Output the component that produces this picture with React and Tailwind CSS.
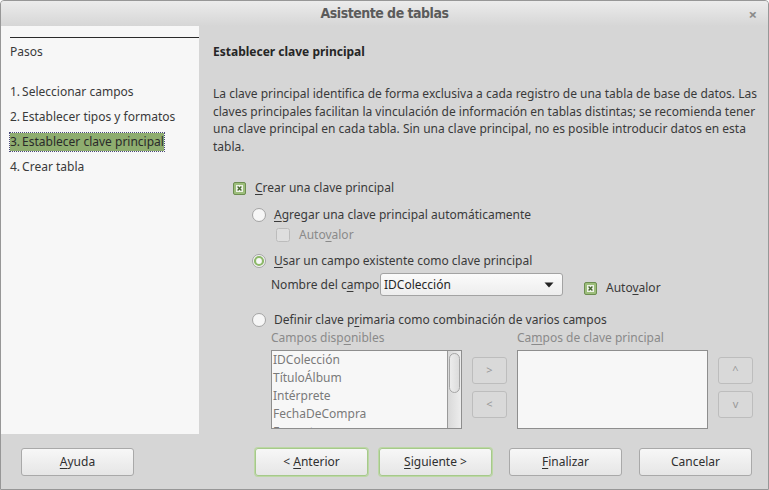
import React from 'react';

const font = { fontFamily: '"Noto Sans", "Open Sans", sans-serif' };

// small check box, ticked with a green square
const CheckOn = () => (
    <svg width="13" height="13" viewBox="0 0 13 13">
        <rect x="0.5" y="0.5" width="12" height="12" rx="1.5" fill="#9dbe7c" stroke="#6c8d50" />
        <rect x="3" y="3" width="7" height="7" fill="#eef3e8" />
        <path d="M4.6 4.6l3.8 3.8M8.4 4.6l-3.8 3.8" stroke="#46652f" strokeWidth="1.4" />
    </svg>
);

const CheckOff = () => (
    <svg width="14" height="14" viewBox="0 0 14 14">
        <rect x="0.5" y="0.5" width="13" height="13" rx="2" fill="#dedede" stroke="#bcbcbc" />
    </svg>
);

const Radio = ({ on }) => (
    <svg width="14" height="14" viewBox="0 0 14 14">
        <circle cx="7" cy="7" r="6.5" fill="#f6f6f6" stroke="#a3a3a3" />
        {on && <circle cx="7" cy="7" r="4" fill="#f8f8f8" stroke="#8db86a" strokeWidth="2.2" />}
    </svg>
);

const Btn = ({ children, focus, className = '' }) => (
    <div
        className={`h-[28px] w-[113px] flex items-center justify-center rounded-[3px] border text-[12px] text-[#2f2f2f] bg-gradient-to-b from-[#f7f7f7] to-[#e6e6e6] ${focus ? 'border-[#a6c98b] shadow-[0_0_0_1px_#bcd8a4]' : 'border-[#a9a9a9]'} ${className}`}
    >
        <span className="whitespace-pre">{children}</span>
    </div>
);

const SmallBtn = ({ children }) => (
    <div className="h-[27px] w-[35px] flex items-center justify-center rounded-[3px] border border-[#bdbdbd] bg-[#d9d9d9] text-[11px] text-[#9a9a9a]">
        {children}
    </div>
);

const u = (t) => <span className="underline underline-offset-2">{t}</span>;

export default function App() {
    const steps = [
        ['1.', 'Seleccionar campos'],
        ['2.', 'Establecer tipos y formatos'],
        ['3.', 'Establecer clave principal'],
        ['4.', 'Crear tabla'],
    ];
    const fields = ['IDColección', 'TítuloÁlbum', 'Intérprete', 'FechaDeCompra', 'Formato'];

    return (
        <div style={font} className="w-[769px] h-[490px] flex flex-col overflow-hidden border border-[#979797] rounded-t-[4px] bg-[#d6d6d6] text-[#3a3a3a]">
            {/* title bar */}
            <div className="relative h-[25px] shrink-0 flex items-center justify-center bg-gradient-to-b from-[#ececec] to-[#d6d6d6]">
                <span
                    style={{ fontFamily: '"Liberation Sans Narrow", "DejaVu Sans Condensed", sans-serif' }}
                    className="text-[14px] font-bold text-[#5b5b5b] tracking-[-0.5px]"
                >
                    Asistente de tablas
                </span>
                <span className="absolute right-[11px] top-[2px] text-[15px] font-bold text-[#8a8a8a]">×</span>
            </div>

            {/* body */}
            <div className="flex h-[408px] shrink-0">
                {/* steps */}
                <div className="w-[198px] shrink-0 bg-[#f7f7f7] pl-[9px] pt-[11px] text-[12px]">
                    <div className="border-t border-[#2a2a2a]" />
                    <div className="mt-[5px] h-[18px] leading-[18px]">Pasos</div>
                    <div className="mt-[22px] flex flex-col gap-[7px]">
                        {steps.map(([n, s], i) => (
                            <div key={s} className="h-[18px] leading-[18px]">
                                <span className={i === 2 ? 'inline-block bg-[#8ead6f] outline outline-1 outline-dotted outline-[#4a4a7a] text-[#2a2a2a]' : ''}>
                                    <span className="mr-[2px]">{n}</span>
                                    {s}
                                </span>
                            </div>
                        ))}
                    </div>
                </div>

                {/* page */}
                <div className="flex-1 pl-[14px] pt-[17px] text-[12px]">
                    <div className="h-[18px] leading-[18px] font-bold text-[#262626]">Establecer clave principal</div>
                    <p className="mt-[24px] w-[552px] leading-[17.5px]">
                        La clave principal identifica de forma exclusiva a cada registro de una tabla de base de datos. Las claves
                        principales facilitan la vinculación de información en tablas distintas; se recomienda tener una clave
                        principal en cada tabla. Sin una clave principal, no es posible introducir datos en esta tabla.
                    </p>

                    <div className="mt-[24px] ml-[20px] h-[18px] flex items-center gap-[9px]">
                        <CheckOn />
                        <span>{u('C')}rear una clave principal</span>
                    </div>
                    <div className="mt-[9px] ml-[39px] h-[18px] flex items-center gap-[8px]">
                        <Radio />
                        <span>{u('A')}gregar una clave principal automáticamente</span>
                    </div>
                    <div className="mt-[2px] ml-[63px] h-[18px] flex items-center gap-[9px] text-[#8a8a8a]">
                        <CheckOff />
                        <span>Auto{u('v')}alor</span>
                    </div>
                    <div className="mt-[8px] ml-[39px] h-[18px] flex items-center gap-[8px]">
                        <Radio on />
                        <span>{u('U')}sar un campo existente como clave principal</span>
                    </div>
                    <div className="mt-[3px] ml-[58px] h-[23px] flex items-center">
                        <span className="w-[109px] whitespace-nowrap">Nombre del c{u('a')}mpo</span>
                        <div className="h-[23px] w-[183px] flex items-center justify-between rounded-[3px] border border-[#a3a3a3] bg-gradient-to-b from-[#fbfbfb] to-[#ededed] pl-[3px] pr-[8px] text-[#262626]">
                            <span>IDColección</span>
                            <svg width="10" height="6" viewBox="0 0 10 6">
                                <path d="M0.5 0.5h9L5 5.5z" fill="#222" />
                            </svg>
                        </div>
                        <div className="ml-[21px] mt-[7px] flex items-center gap-[9px]">
                            <CheckOn />
                            <span>Auto{u('v')}alor</span>
                        </div>
                    </div>
                    <div className="mt-[15px] ml-[39px] h-[18px] flex items-center gap-[8px]">
                        <Radio />
                        <span>Definir clave p{u('r')}imaria como combinación de varios campos</span>
                    </div>

                    <div className="ml-[58px] flex text-[#8a8a8a]">
                        <div className="w-[246px] h-[17px] leading-[17px]">Campos disp{u('o')}nibles</div>
                        <div className="h-[17px] leading-[17px]">Ca{u('m')}pos de clave principal</div>
                    </div>
                    <div className="ml-[58px] mt-[4px] flex items-start">
                        <div className="w-[191px] h-[79px] flex border border-[#8e8e8e] bg-[#f7f7f7] overflow-hidden">
                            <div className="flex-1 pl-[1px] text-[#7a7a7a]">
                                {fields.map((f) => (
                                    <div key={f} className="h-[18px] leading-[18px]">{f}</div>
                                ))}
                            </div>
                            <div className="w-[14px] border-l border-[#9a9a9a] bg-gradient-to-r from-[#d9d9d9] to-[#ededed] px-[1px] pt-[2px]">
                                <div className="h-[40px] rounded-full border border-[#a5a5a5] bg-gradient-to-r from-[#ececec] to-[#dcdcdc]" />
                            </div>
                        </div>
                        <div className="ml-[10px] mt-[7px] flex flex-col gap-[7px]">
                            <SmallBtn>&gt;</SmallBtn>
                            <SmallBtn>&lt;</SmallBtn>
                        </div>
                        <div className="ml-[10px] w-[191px] h-[79px] border border-[#8e8e8e] bg-[#f7f7f7]" />
                        <div className="ml-[10px] mt-[7px] flex flex-col gap-[7px]">
                            <SmallBtn>^</SmallBtn>
                            <SmallBtn>v</SmallBtn>
                        </div>
                    </div>
                </div>
            </div>

            {/* buttons */}
            <div className="flex-1 flex items-center pl-[20px]">
                <Btn>{u('A')}yuda</Btn>
                <Btn focus className="ml-[121px]">{'< '}{u('A')}nterior</Btn>
                <Btn focus className="ml-[11px]">{u('S')}iguiente{' >'}</Btn>
                <Btn className="ml-[17px]">{u('F')}inalizar</Btn>
                <Btn className="ml-[17px]">Cancelar</Btn>
            </div>
        </div>
    );
}
